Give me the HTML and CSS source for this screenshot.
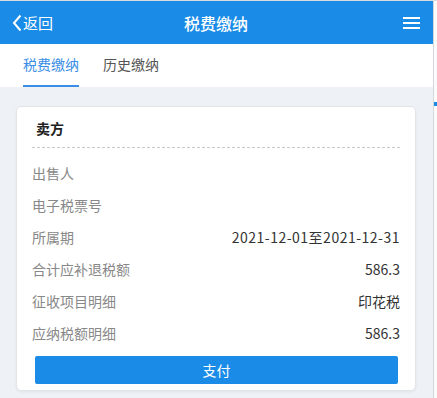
FILE: index.html
```html
<!DOCTYPE html>
<html lang="zh-CN">
<head>
    <meta charset="UTF-8">
    <meta name="viewport" content="width=device-width, initial-scale=1.0">
    <title>税费缴纳</title>
    <link rel="stylesheet" href="styles.css">
</head>
<body>
    <div class="pagina">
        <div class="app">
            <!-- Barra superior -->
            <div class="cabecera">
                <div class="volver">
                    <svg width="10" height="18" viewBox="0 0 10 18"><path d="M8.5 1.5 L2 9 L8.5 16.5" fill="none" stroke="#fff" stroke-width="2"/></svg>
                    <span>返回</span>
                </div>
                <div class="titulo">税费缴纳</div>
                <div class="menu">
                    <span></span><span></span><span></span>
                </div>
            </div>

            <!-- Pestañas -->
            <div class="pestanas">
                <div class="pestana activa">税费缴纳</div>
                <div class="pestana">历史缴纳</div>
            </div>

            <div class="contenido">
                <div class="tarjeta">
                    <div class="tarjeta-titulo">卖方</div>
                    <div class="fila"><span class="etiqueta">出售人</span><span class="valor"></span></div>
                    <div class="fila"><span class="etiqueta">电子税票号</span><span class="valor"></span></div>
                    <div class="fila"><span class="etiqueta">所属期</span><span class="valor fecha">2021-12-01至2021-12-31</span></div>
                    <div class="fila"><span class="etiqueta">合计应补退税额</span><span class="valor">586.3</span></div>
                    <div class="fila"><span class="etiqueta">征收项目明细</span><span class="valor">印花税</span></div>
                    <div class="fila"><span class="etiqueta">应纳税额明细</span><span class="valor">586.3</span></div>
                    <button class="boton-pagar">支付</button>
                </div>
            </div>
        </div>
        <div class="barra-lateral"><span class="punto"></span></div>
    </div>
</body>
</html>
```

FILE: styles.css
```css
body {
    margin: 0;
    font-family: "Noto Sans CJK SC", "Noto Sans", sans-serif;
    font-size: 14px;
    color: #333;
    background-color: #eef2f6;
}

.pagina {
    display: flex;
    height: 398px;
    border-top: 1px solid #d6dbe0;
    box-sizing: border-box;
}

.app {
    width: 433px;
    background-color: #eef2f6;
}

/* Barra lateral derecha */
.barra-lateral {
    flex: 1;
    background-color: #fbfbfb;
    border-left: 1px solid #d4d8dc;
    padding-top: 101px;
}

.punto {
    display: block;
    width: 3px;
    height: 4px;
    background-color: #1a8ce8;
}

.cabecera {
    height: 43px;
    background-color: #1a8ce8;
    color: #fff;
    display: flex;
    align-items: center;
    justify-content: space-between;
    padding: 0 13px 0 12px;
}

.volver {
    display: flex;
    align-items: center;
    gap: 1px;
    font-size: 15px;
    width: 80px;
}

.titulo {
    font-size: 16px;
    font-weight: 500;
}

.menu {
    width: 80px;
    display: flex;
    flex-direction: column;
    align-items: flex-end;
    gap: 3px;
}

.menu span {
    display: block;
    width: 17px;
    height: 2px;
    background-color: #fff;
}

.pestanas {
    height: 43px;
    background-color: #fff;
    display: flex;
    padding-left: 23px;
    gap: 24px;
}

.pestana {
    line-height: 41px;
    border-bottom: 2px solid transparent;
    color: #555;
}

.pestana.activa {
    color: #3a8ee6;
    border-bottom-color: #3a8ee6;
}

.contenido {
    padding: 19px 17px 0 16px;
}

.tarjeta {
    background-color: #fff;
    border: 1px solid #e2e5e8;
    border-radius: 5px;
    box-shadow: 0 1px 3px rgba(0, 0, 0, 0.06);
    padding: 0 15px 6px 15px;
}

.tarjeta-titulo {
    font-weight: bold;
    color: #222;
    line-height: 22px;
    padding: 10px 0 8px 4px;
    border-bottom: 1px dashed #c8c8c8;
    margin-bottom: 9px;
}

.fila {
    display: flex;
    justify-content: space-between;
    align-items: center;
    height: 32px;
}

.etiqueta {
    color: #888;
}

.valor {
    color: #333;
}

.fecha {
    letter-spacing: 0.5px;
}

.boton-pagar {
    display: block;
    width: calc(100% - 5px);
    margin: 7px 0 0 3px;
    height: 28px;
    border: none;
    border-radius: 2px;
    background-color: #1a8ce8;
    color: #fff;
    font-family: inherit;
    font-size: 14px;
}
```
